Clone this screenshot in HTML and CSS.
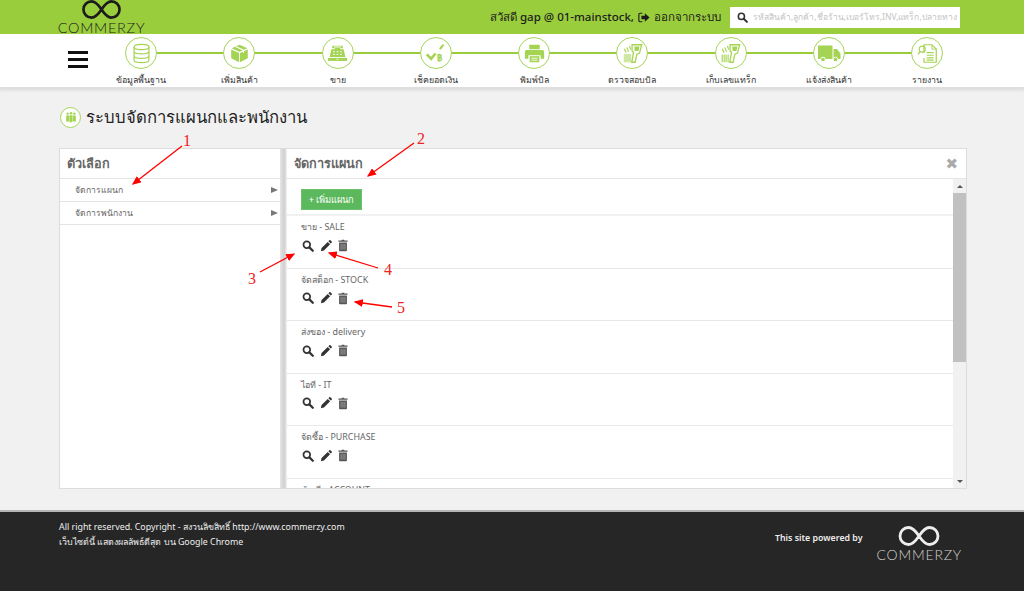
FILE: index.html
```html
<!DOCTYPE html>
<html lang="th">
<head>
<meta charset="utf-8">
<title>Commerzy</title>
<link rel="stylesheet" href="styles.css">
</head>
<body>
<svg class="defs" width="0" height="0" aria-hidden="true">
  <defs>
    <symbol id="logo-mark" viewBox="0 0 40 20"><path d="M20 10C16 4 13 1.500 9.500 1.500a8.500 8.500 0 0 0 0 17C13 18.500 16 16 20 10s7-8.500 10.500-8.500a8.500 8.500 0 0 1 0 17C27 18.500 24 16 20 10z" fill="none" stroke="currentColor" stroke-width="2.800"/></symbol>
    <symbol id="i-search" viewBox="0 0 14 14"><circle cx="5.600" cy="5.600" r="3.900" fill="none" stroke="currentColor" stroke-width="2"/><path d="M8.600 8.600l4 4" stroke="currentColor" stroke-width="2.600" stroke-linecap="round"/></symbol>
    <symbol id="i-pencil" viewBox="0 0 14 14"><path d="M1 13l.8-3.600L9 2.200l2.800 2.800-7.200 7.200zM9.800 1.400l1-1a1 1 0 0 1 1.400 0l1.400 1.400a1 1 0 0 1 0 1.400l-1 1z" fill="currentColor"/></symbol>
    <symbol id="i-trash" viewBox="0 0 12 14"><path d="M4.200 1l.5-1h2.600l.5 1H11.500v1.600H.5V1zM1.300 3.400h9.400V13a1 1 0 0 1-1 1H2.300a1 1 0 0 1-1-1z" fill="currentColor"/><path d="M3.700 5v7M6 5v7M8.300 5v7" stroke="#fff" stroke-width=".7" opacity=".7"/></symbol>
    <symbol id="i-gun" viewBox="0 0 24 24"><path d="M11.500 2H22.500L20 11.500l-3 1.200-2 9.300H11.200l2-11.500-1.700-1.500z" fill="none" stroke="currentColor" stroke-width="1.500"/><path d="M14 4h6l-1.200 5h-4.300z" fill="currentColor"/><path d="M8.500 3.500l1.400 4M5.500 5l2 5M2.500 6.500l2.300 4.500" stroke="currentColor" stroke-width="1.300"/></symbol>
  </defs>
</svg>

<header class="topbar">
  <a class="brand">
    <svg class="brand-mark"><use href="#logo-mark"/></svg>
    <span class="brand-name">COMMERZY</span>
  </a>
  <div class="userline">สวัสดี gap @ 01-mainstock, <svg class="logout" viewBox="0 0 14 12"><path d="M5 1H2.500A1.500 1.500 0 0 0 1 2.500v7A1.500 1.500 0 0 0 2.500 11H5" fill="none" stroke="currentColor" stroke-width="1.300"/><path d="M8 1l5.500 5L8 11V8H4V4h4z" fill="currentColor"/></svg> ออกจากระบบ</div>
  <div class="search">
    <svg class="search-icon"><use href="#i-search"/></svg>
    <span class="search-hint">รหัสสินค้า,ลูกค้า,ชื่อร้าน,เบอร์โทร,INV,แทร็ก,ปลายทาง</span>
  </div>
</header>

<nav class="mainnav">
  <div class="burger"><i></i><i></i><i></i></div>
  <ol class="steps">
    <li class="step"><span class="disc"><svg viewBox="0 0 24 24"><g fill="none" stroke="currentColor" stroke-width="1.400"><ellipse cx="12" cy="4.500" rx="8.500" ry="3"/><path d="M3.500 4.500v15c0 1.700 3.800 3 8.500 3s8.500-1.300 8.500-3v-15M3.500 9.500c0 1.700 3.800 3 8.500 3s8.500-1.300 8.500-3M3.500 14.500c0 1.700 3.800 3 8.500 3s8.500-1.300 8.500-3"/></g></svg></span><span class="step-label">ข้อมูลพื้นฐาน</span></li>
    <li class="step"><span class="disc"><svg viewBox="0 0 24 24"><path d="M12 2l9 4-9 4-9-4zM2.500 7.500l9 4V22l-9-4.500zM21.500 7.500l-9 4V22l9-4.500z" fill="currentColor"/><path d="M7.500 4l9 4.200v3" fill="none" stroke="#fff" stroke-width="1.300"/></svg></span><span class="step-label">เพิ่มสินค้า</span></li>
    <li class="step"><span class="disc"><svg viewBox="0 0 24 24"><path d="M6 3h12v3h-3v1h4l2 9H3l2-9h4V6H6z" fill="currentColor"/><path d="M8 4.500h8M7 10h2M11 10h2M15 10h2M7 13h2M11 13h2M15 13h2" stroke="#fff" stroke-width="1.100"/><path d="M1 17h22v3.500H1z" fill="currentColor"/><path d="M11 18.700h2" stroke="#fff"/></svg></span><span class="step-label">ขาย</span></li>
    <li class="step"><span class="disc"><svg viewBox="0 0 24 24"><path d="M2 13l5 5 5-6" fill="none" stroke="currentColor" stroke-width="3"/><path d="M17 7l4-5" stroke="currentColor" stroke-width="2.500"/><text class="baht" x="13.500" y="21">฿</text></svg></span><span class="step-label">เช็คยอดเงิน</span></li>
    <li class="step"><span class="disc"><svg viewBox="0 0 24 24"><path d="M6 2h12v5H6zM3 8h18a2 2 0 0 1 2 2v8h-4v-4H5v4H1v-8a2 2 0 0 1 2-2z" fill="currentColor"/><path d="M6.500 15h11v7h-11z" fill="currentColor"/><path d="M8.500 17.300h7M8.500 19.600h7" stroke="#fff"/></svg></span><span class="step-label">พิมพ์บิล</span></li>
    <li class="step"><span class="disc"><svg viewBox="0 0 24 24"><use href="#i-gun"/><path d="M2 12.500h8.500V22H2z" fill="currentColor" opacity=".55"/></svg></span><span class="step-label">ตรวจสอบบิล</span></li>
    <li class="step"><span class="disc"><svg viewBox="0 0 24 24"><use href="#i-gun"/><path d="M2.500 13v9M4.800 13v9M7 13v9M9.300 13v9" stroke="currentColor" stroke-width="1.300"/></svg></span><span class="step-label">เก็บเลขแทร็ก</span></li>
    <li class="step"><span class="disc disc-wide"><svg viewBox="0 0 24 24"><path d="M1 4.500h14.500V18H1zM16.500 8h3.500l3.500 4.500V18h-7z" fill="currentColor"/><circle cx="6" cy="18.500" r="2.300" fill="currentColor" stroke="#fff"/><circle cx="18.500" cy="18.500" r="2.300" fill="currentColor" stroke="#fff"/></svg></span><span class="step-label">แจ้งส่งสินค้า</span></li>
    <li class="step"><span class="disc"><svg viewBox="0 0 24 24"><path d="M8 11V2h9l5 5v15H8v-5" fill="none" stroke="currentColor" stroke-width="1.400"/><path d="M17 2v5h5" fill="none" stroke="currentColor"/><path d="M11 11h8M11 14h8M11 17h8M11 19.500h8" stroke="currentColor" stroke-width="1.300"/><circle cx="6" cy="7" r="3.500" fill="none" stroke="currentColor" stroke-width="1.300"/><path d="M3.500 10L1 13" stroke="currentColor" stroke-width="1.500"/></svg></span><span class="step-label">รายงาน</span></li>
  </ol>
</nav>

<main class="content">
  <h1 class="page-title">
    <span class="title-disc"><svg viewBox="0 0 16 16"><circle cx="3.500" cy="3.500" r="1.600"/><circle cx="8" cy="3" r="1.800"/><circle cx="12.500" cy="3.500" r="1.600"/><path d="M1.500 6h4v8h-4zM6 5.500h4V15H6zM10.500 6h4v8h-4z"/></svg></span>
    ระบบจัดการแผนกและพนักงาน
  </h1>
  <section class="panel">
    <aside class="side">
      <h2 class="panel-head">ตัวเลือก</h2>
      <div class="side-item">จัดการแผนก<span class="tri"></span></div>
      <div class="side-item">จัดการพนักงาน<span class="tri"></span></div>
    </aside>
    <div class="gutter"></div>
    <div class="mainpane">
      <h2 class="panel-head">จัดการแผนก<span class="close">✖</span></h2>
      <div class="pane-body">
        <div class="list">
          <div class="toolbar"><button class="add">+ เพิ่มแผนก</button></div>
          <div class="dept"><div class="dept-name">ขาย - SALE</div><div class="tools"><svg class="t-search"><use href="#i-search"/></svg><svg class="t-pencil"><use href="#i-pencil"/></svg><svg class="t-trash"><use href="#i-trash"/></svg></div></div>
          <div class="dept"><div class="dept-name">จัดสต็อก - STOCK</div><div class="tools"><svg class="t-search"><use href="#i-search"/></svg><svg class="t-pencil"><use href="#i-pencil"/></svg><svg class="t-trash"><use href="#i-trash"/></svg></div></div>
          <div class="dept"><div class="dept-name">ส่งของ - delivery</div><div class="tools"><svg class="t-search"><use href="#i-search"/></svg><svg class="t-pencil"><use href="#i-pencil"/></svg><svg class="t-trash"><use href="#i-trash"/></svg></div></div>
          <div class="dept"><div class="dept-name">ไอที - IT</div><div class="tools"><svg class="t-search"><use href="#i-search"/></svg><svg class="t-pencil"><use href="#i-pencil"/></svg><svg class="t-trash"><use href="#i-trash"/></svg></div></div>
          <div class="dept"><div class="dept-name">จัดซื้อ - PURCHASE</div><div class="tools"><svg class="t-search"><use href="#i-search"/></svg><svg class="t-pencil"><use href="#i-pencil"/></svg><svg class="t-trash"><use href="#i-trash"/></svg></div></div>
          <div class="dept"><div class="dept-name">บัญชี - ACCOUNT</div></div>
        </div>
        <div class="scrollbar"><span class="arrow up"></span><span class="thumb"></span><span class="track"></span><span class="arrow down"></span></div>
      </div>
    </div>
  </section>
</main>

<footer class="footer">
  <div class="legal">
    <p>All right reserved. Copyright - สงวนลิขสิทธิ์ http://www.commerzy.com</p>
    <p>เว็บไซต์นี้ แสดงผลลัพธ์ดีสุด บน Google Chrome</p>
  </div>
  <div class="powered">
    <span>This site powered by</span>
    <div class="foot-brand"><svg class="foot-mark"><use href="#logo-mark"/></svg><span class="foot-name">COMMERZY</span></div>
  </div>
</footer>

<svg class="notes" viewBox="0 0 1024 591">
  <defs><marker id="tip" markerWidth="7" markerHeight="6" refX="6" refY="3" orient="auto"><path d="M0 0l7 3-7 3z" fill="#f00"/></marker></defs>
  <g class="note-lines">
    <path d="M182 146L133 184" marker-end="url(#tip)"/>
    <path d="M414 143L368 176" marker-end="url(#tip)"/>
    <path d="M260 272L294 254" marker-end="url(#tip)"/>
    <path d="M378 268L329 253" marker-end="url(#tip)"/>
    <path d="M392 307L355 302" marker-end="url(#tip)"/>
  </g>
  <g class="note-nums">
    <text x="183" y="146">1</text>
    <text x="417" y="144">2</text>
    <text x="248" y="284">3</text>
    <text x="384" y="275">4</text>
    <text x="397" y="313">5</text>
  </g>
</svg>
</body>
</html>
```

FILE: styles.css
```css
* { box-sizing: border-box; }
html, body { margin: 0; padding: 0; }
body {
  position: relative;
  width: 1024px;
  height: 591px;
  overflow: hidden;
  background: #f1f1f1;
  color: #555;
  font-family: "Noto Sans", "Liberation Sans", sans-serif;
}
.defs { position: absolute; }

.topbar {
  height: 34px;
  background: #9acd3c;
  display: flex;
  align-items: center;
  padding: 0 64px 0 58px;
  color: #1c1c1c;
  overflow: hidden;
}
.brand { width: 87px; height: 34px; display: flex; flex-direction: column; align-items: center; color: #1c1c1c; flex: none; }
.brand-mark { width: 41px; height: 19px; flex: none; }
.brand-name { font: 300 14.500px/13px "Lato", sans-serif; letter-spacing: .7px; margin-top: 2px; white-space: nowrap; }
.userline { margin-left: auto; font-size: 11.500px; font-weight: 500; white-space: nowrap; display: flex; align-items: center; gap: 4px; }
.logout { width: 12px; height: 11px; }
.search {
  margin-left: 9px;
  width: 230px;
  height: 21px;
  background: #fff;
  display: flex;
  align-items: center;
  padding-left: 7px;
  gap: 5px;
  overflow: hidden;
  flex: none;
}
.search-icon { width: 11px; height: 11px; color: #333; flex: none; }
.search-hint { font-size: 8.500px; color: #c4c4c4; white-space: nowrap; }

.mainnav {
  height: 53px;
  background: #fff;
  display: flex;
  box-shadow: 0 2px 0 #dedede, 0 4px 2px #e2e2e2;
  padding-left: 68px;
}
.burger { width: 20px; margin-top: 17px; height: 18px; display: flex; flex-direction: column; gap: 4px; flex: none; }
.burger i { display: block; height: 3px; background: #111; }
.steps {
  list-style: none;
  margin: 0 0 0 4px;
  padding: 0;
  display: flex;
  position: relative;
}
.steps::before {
  content: "";
  position: absolute;
  left: 49px;
  right: 49px;
  top: 18px;
  height: 2px;
  background: #9acd3c;
}
.step { width: 98.250px; display: flex; flex-direction: column; align-items: center; position: relative; }
.disc {
  width: 32px;
  height: 32px;
  margin-top: 3px;
  border-radius: 50%;
  border: 1px solid #a6d45a;
  background: #fff;
  color: #a5d454;
  display: flex;
  align-items: center;
  justify-content: center;
}
.disc svg { width: 21px; height: 21px; }
.disc-wide svg { width: 24px; height: 24px; }
.baht { font: bold 10px "Liberation Sans", sans-serif; fill: currentColor; }
.step-label { margin-top: 5px; font-size: 8.800px; line-height: 13px; color: #333; white-space: nowrap; }

.content { padding: 17px 57px 21px 59px; }
.page-title {
  margin: 0 0 18px;
  height: 26px;
  display: flex;
  align-items: center;
  gap: 5px;
  font-size: 16.700px;
  font-weight: 400;
  color: #222;
}
.title-disc {
  width: 21px;
  height: 21px;
  border-radius: 50%;
  border: 1px solid #a6d45a;
  background: #fff;
  display: flex;
  align-items: center;
  justify-content: center;
  margin-left: 1px;
}
.title-disc svg { width: 12px; height: 12px; fill: #a5d454; }

.panel {
  height: 341px;
  display: flex;
  background: #fff;
  border: 1px solid #ddd;
}
.side { width: 220px; flex: none; }
.gutter { width: 7px; flex: none; background: linear-gradient(to right, #e6e6e6, #cfcfcf 60%, #f2f2f2); }
.mainpane { flex: 1; min-width: 0; display: flex; flex-direction: column; }
.panel-head {
  margin: 0;
  height: 30px;
  padding: 0 8px 0 7px;
  display: flex;
  align-items: center;
  justify-content: space-between;
  font-size: 12.700px;
  font-weight: 600;
  color: #666;
  border-bottom: 1px solid #e4e4e4;
}
.side-item {
  height: 23px;
  padding: 0 2px 0 15px;
  display: flex;
  align-items: center;
  justify-content: space-between;
  font-size: 8.600px;
  color: #666;
  border-bottom: 1px solid #e4e4e4;
}
.tri { border-style: solid; border-width: 3.500px 0 3.500px 7px; border-color: transparent transparent transparent #777; }
.close { font: 15px "DejaVu Sans", sans-serif; color: #aaa; }
.pane-body { flex: 1; min-height: 0; display: flex; }
.list { flex: 1; min-width: 0; overflow: hidden; }
.toolbar { height: 37px; padding: 7px 14px 0; border-bottom: 2px solid #f1f1f1; }
.add {
  height: 21px;
  width: 61px;
  padding: 0;
  background: #5cb85c;
  border: 1px solid #6cc06c;
  color: #fff;
  font: 500 9.300px "Noto Sans", "Liberation Sans", sans-serif;
}
.dept { height: 52.500px; padding: 4px 15px 0; border-bottom: 1px solid #e8e8e8; }
.dept-name { font-size: 8.900px; line-height: 14px; color: #666; margin-left: -1px; }
.tools { display: flex; align-items: center; gap: 6px; margin-top: 5px; height: 13px; color: #333; }
.tools svg { flex: none; }
.t-search { width: 12px; height: 12px; }
.t-pencil { width: 12px; height: 12px; }
.t-trash { width: 10px; height: 13px; color: #555; }
.scrollbar { width: 13px; flex: none; display: flex; flex-direction: column; background: #f1f1f1; }
.arrow { height: 14px; flex: none; display: flex; align-items: center; justify-content: center; }
.arrow::before { content: ""; border: 3.500px solid transparent; }
.up::before { border-bottom-color: #555; border-top-width: 0; }
.down::before { border-top-color: #555; border-bottom-width: 0; }
.thumb { height: 169px; background: #c1c1c1; flex: none; }
.track { flex: 1; }

.footer {
  height: 81px;
  background: #262626;
  border-top: 2px solid #b5b5b5;
  display: flex;
  justify-content: space-between;
  padding: 8px 0 0 59px;
  color: #eee;
}
.legal p { margin: 0; font-size: 8.850px; line-height: 14.500px; }
.powered { display: flex; align-items: flex-start; gap: 14px; margin-right: 62px; font-size: 8.800px; }
.powered > span { margin-top: 12px; font-weight: 600; white-space: nowrap; }
.foot-brand { display: flex; flex-direction: column; align-items: center; color: #eee; padding-top: 6px; }
.foot-mark { width: 42px; height: 20px; }
.foot-name { font: 300 14px/18px "Lato", sans-serif; letter-spacing: .8px; color: #d0d0d0; }

.notes { position: absolute; left: 0; top: 0; width: 1024px; height: 591px; pointer-events: none; }
.note-lines path { fill: none; stroke: #f00; stroke-width: 1.300; }
.note-nums text { font: 16px "Liberation Serif", serif; fill: #e22; }
```
